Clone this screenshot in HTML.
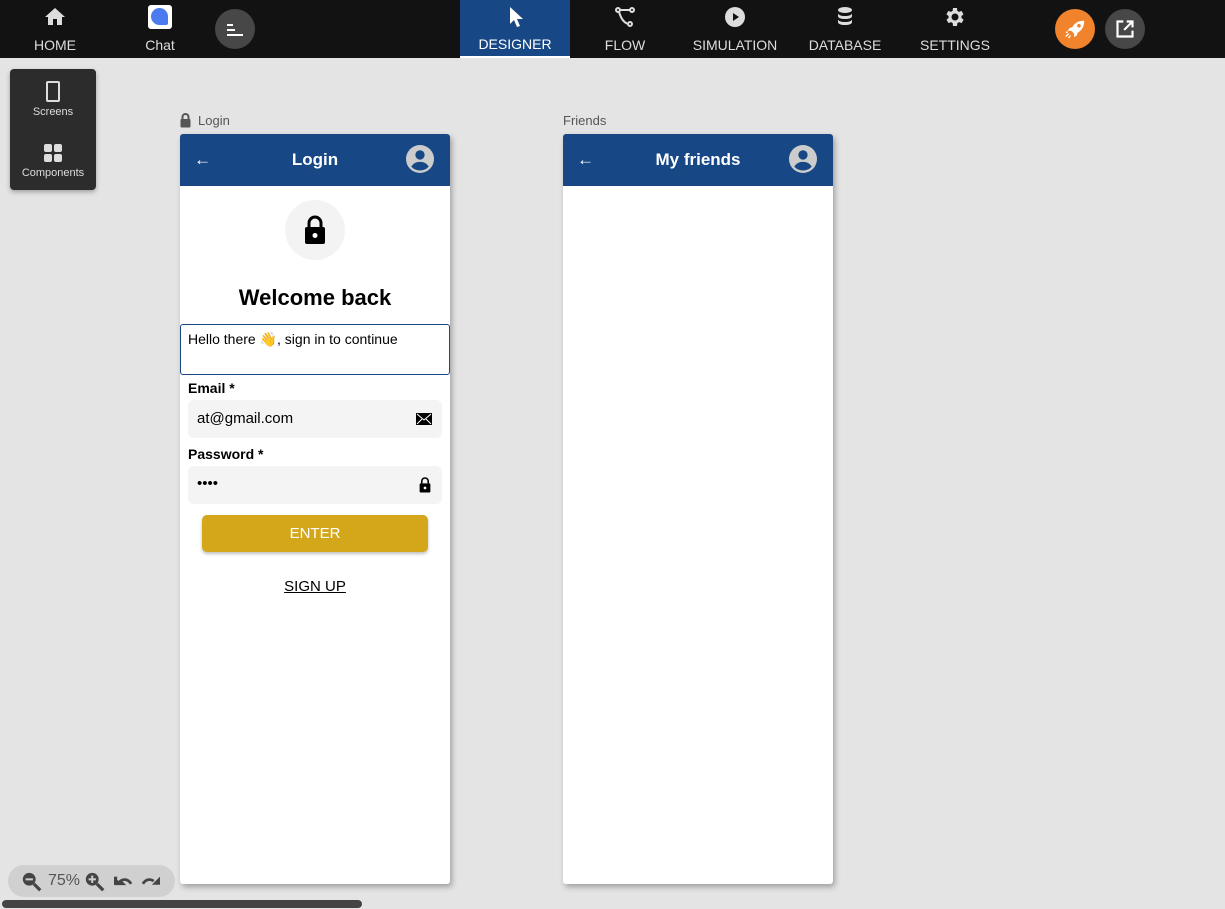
<!DOCTYPE html>
<html><head><style>
*{box-sizing:border-box;margin:0;padding:0}
body{width:1225px;height:909px;background:#e4e4e4;font-family:"Liberation Sans",sans-serif;position:relative;overflow:hidden}
.top{position:absolute;left:0;top:0;width:1225px;height:58px;background:#121212}
.nav{position:absolute;top:0;height:58px;text-align:center;color:#ddd;font-size:14px}
.nav .lbl{position:absolute;left:0;right:0;top:37px}
.nav svg{position:absolute;top:5px;left:50%;margin-left:-12px}
.abs{position:absolute}
.phone{position:absolute;top:134px;width:270px;height:750px;background:#fff;border-radius:3px;box-shadow:2px 3px 6px rgba(0,0,0,.3)}
.ph{height:52px;background:#174885;border-radius:3px 3px 0 0;position:relative;color:#fff;text-align:center;font-size:17px;line-height:52px;font-weight:bold}
</style></head><body>
<div class="top"></div>
<div class="nav" style="left:20px;width:70px"><svg width="24" height="24" viewBox="0 0 24 24"><path fill="#ddd" d="M10 20v-6h4v6h5v-8h3L12 3 2 12h3v8z"/></svg><div class="lbl">HOME</div></div>
<div class="nav" style="left:125px;width:70px"><div class="abs" style="left:23px;top:5px;width:24px;height:24px;background:#fff;border-radius:3px"><div class="abs" style="left:3px;top:3px;width:17px;height:17px;border-radius:50% 50% 2px 50%;background:#4a7cf0"></div></div><div class="lbl">Chat</div></div>
<div class="abs" style="left:215px;top:9px;width:40px;height:40px;border-radius:50%;background:#474747"><div class="abs" style="left:12px;top:15px;width:6px;height:2px;background:#fff"></div><div class="abs" style="left:12px;top:20px;width:8px;height:2px;background:#fff"></div><div class="abs" style="left:12px;top:25px;width:16px;height:2px;background:#fff"></div></div>
<div class="abs" style="left:460px;top:0;width:110px;height:58px;background:#174885;border-bottom:2px solid #fff"></div>
<div class="nav" style="left:460px;width:110px;color:#fff"><svg width="24" height="24" viewBox="0 0 24 24"><path fill="#fff" d="M7 2v17l4-4 3 7 3-1-3-7h6z"/></svg><div class="lbl" style="top:36px">DESIGNER</div></div>
<div class="nav" style="left:590px;width:70px"><svg width="24" height="24" viewBox="0 0 24 24" fill="none" stroke="#ddd" stroke-width="2"><circle cx="5" cy="5" r="2"/><circle cx="19" cy="5" r="2"/><circle cx="17" cy="19" r="2"/><path d="M7 5h10M6 7c2 6 4 10 9 12"/></svg><div class="lbl">FLOW</div></div>
<div class="nav" style="left:685px;width:100px"><svg width="24" height="24" viewBox="0 0 24 24"><circle cx="12" cy="12" r="10" fill="#ddd"/><path d="M10 8l6 4-6 4z" fill="#121212"/></svg><div class="lbl">SIMULATION</div></div>
<div class="nav" style="left:800px;width:90px"><svg width="24" height="24" viewBox="0 0 24 24" fill="#ddd"><ellipse cx="12" cy="5" rx="7" ry="3"/><path d="M5 8c0 2 3 3 7 3s7-1 7-3v3c0 2-3 3-7 3s-7-1-7-3zM5 14c0 2 3 3 7 3s7-1 7-3v3c0 2-3 3-7 3s-7-1-7-3z"/></svg><div class="lbl">DATABASE</div></div>
<div class="nav" style="left:915px;width:80px"><svg width="24" height="24" viewBox="0 0 24 24"><path fill="#ddd" d="M19.4 13a7 7 0 000-2l2.1-1.6-2-3.5-2.5 1a7 7 0 00-1.7-1L15 3h-4l-.4 2.9a7 7 0 00-1.7 1l-2.5-1-2 3.5L6.6 11a7 7 0 000 2l-2.1 1.6 2 3.5 2.5-1a7 7 0 001.7 1L11 21h4l.4-2.9a7 7 0 001.7-1l2.5 1 2-3.5zM13 15.5a3.5 3.5 0 110-7 3.5 3.5 0 010 7z" transform="translate(-1 0)"/></svg><div class="lbl">SETTINGS</div></div>
<div class="abs" style="left:1055px;top:9px;width:40px;height:40px;border-radius:50%;background:#f0832b"><svg class="abs" style="left:9px;top:9px" width="22" height="22" viewBox="0 0 24 24" fill="#fff"><path d="M21 3c-5 0-9 2-12 7l-3 1-2 3 4 0 3 3 0 4 3-2 1-3c5-3 7-7 7-13zM15 7a2 2 0 110 3 2 2 0 010-3z"/><path d="M5 17l-3 3M7 19l-2 3M4 15l-2 1" stroke="#fff" stroke-width="1.5"/></svg></div>
<div class="abs" style="left:1105px;top:9px;width:40px;height:40px;border-radius:50%;background:#474747"><svg class="abs" style="left:10px;top:10px" width="20" height="20" viewBox="0 0 24 24" fill="none" stroke="#fff" stroke-width="2.6"><path d="M10 3H3v18h18v-7M14 3h7v7M21 3L11 13"/></svg></div>
<div class="abs" style="left:10px;top:69px;width:86px;height:121px;background:#2c2c2c;border-radius:4px;box-shadow:0 2px 5px rgba(0,0,0,.3);color:#ddd;font-size:11px;text-align:center">
<div class="abs" style="left:36px;top:12px;width:14px;height:21px;border:2px solid #ddd;border-radius:2px"></div>
<div class="abs" style="left:0;right:0;top:37px">Screens</div>
<div class="abs" style="left:34px;top:75px;width:8px;height:8px;background:#ddd;border-radius:2px"></div><div class="abs" style="left:44px;top:75px;width:8px;height:8px;background:#ddd;border-radius:2px"></div><div class="abs" style="left:34px;top:85px;width:8px;height:8px;background:#ddd;border-radius:2px"></div><div class="abs" style="left:44px;top:85px;width:8px;height:8px;background:#ddd;border-radius:2px"></div>
<div class="abs" style="left:0;right:0;top:98px">Components</div></div>
<svg class="abs" style="left:179px;top:112px" width="13" height="17" viewBox="0 0 26 32"><path d="M7 13V9a6 6 0 0112 0v4" fill="none" stroke="#555" stroke-width="4"/><rect x="3" y="13" width="20" height="17" rx="2" fill="#555"/></svg>
<div class="abs" style="left:198px;top:113px;color:#555;font-size:13px">Login</div>
<div class="abs" style="left:563px;top:113px;color:#555;font-size:13px">Friends</div>
<div class="phone" style="left:180px">
<div class="ph">Login<span class="abs" style="left:14px;top:0;font-size:17px;font-weight:normal">←</span><svg class="abs" style="left:226px;top:11px" width="28" height="28" viewBox="0 0 24 24"><circle cx="12" cy="12" r="12" fill="#ccc"/><circle cx="12" cy="8.5" r="4" fill="#174885"/><path d="M4.5 18.5c2-3 4.5-4 7.5-4s5.5 1 7.5 4a10 10 0 01-15 0z" fill="#174885"/></svg></div>
<div class="abs" style="left:105px;top:66px;width:60px;height:60px;border-radius:50%;background:#f3f3f3"><svg class="abs" style="left:17px;top:14px" width="26" height="32" viewBox="0 0 26 32"><path d="M7 13V9a6 6 0 0112 0v4" fill="none" stroke="#000" stroke-width="3"/><rect x="3" y="13" width="20" height="17" rx="2"/><circle cx="13" cy="21.5" r="2.5" fill="#fff"/></svg></div>
<div class="abs" style="left:0;right:0;top:151px;text-align:center;font-size:22px;color:#000;font-weight:bold;-webkit-text-stroke:0">Welcome back</div>
<div class="abs" style="left:0;top:190px;width:270px;height:51px;border:1.5px solid #174885;border-radius:3px;padding:6px 7px;font-size:14px">Hello there 👋, sign in to continue</div>
<div class="abs" style="left:8px;top:246px;font-size:14px;font-weight:bold">Email *</div>
<div class="abs" style="left:8px;top:266px;width:254px;height:38px;background:#f4f4f4;border-radius:6px;padding:10px 9px;font-size:15px">at@gmail.com<svg class="abs" style="right:10px;top:13px" width="16" height="12" viewBox="0 0 16 12"><rect width="16" height="12" fill="#000"/><path d="M1 1l7 6 7-6M1 11l5-5M15 11l-5-5" stroke="#fff" stroke-width="1" fill="none"/></svg></div>
<div class="abs" style="left:8px;top:312px;font-size:14px;font-weight:bold">Password *</div>
<div class="abs" style="left:8px;top:332px;width:254px;height:38px;background:#f4f4f4;border-radius:6px;padding:9px 9px;font-size:15px">••••<svg class="abs" style="right:10px;top:10px" width="14" height="18" viewBox="0 0 26 32"><path d="M7 13V9a6 6 0 0112 0v4" fill="none" stroke="#000" stroke-width="3"/><rect x="3" y="13" width="20" height="17" rx="2"/><circle cx="13" cy="21.5" r="2.5" fill="#fff"/></svg></div>
<div class="abs" style="left:22px;top:381px;width:226px;height:37px;background:#d4a61a;border-radius:5px;box-shadow:0 2px 3px rgba(0,0,0,.25);color:#fff;text-align:center;line-height:38px;font-size:15px">ENTER</div>
<div class="abs" style="left:0;right:0;top:444px;text-align:center;font-size:15px;text-decoration:underline">SIGN UP</div>
</div>
<div class="phone" style="left:563px">
<div class="ph">My friends<span class="abs" style="left:14px;top:0;font-size:17px;font-weight:normal">←</span><svg class="abs" style="left:226px;top:11px" width="28" height="28" viewBox="0 0 24 24"><circle cx="12" cy="12" r="12" fill="#ccc"/><circle cx="12" cy="8.5" r="4" fill="#174885"/><path d="M4.5 18.5c2-3 4.5-4 7.5-4s5.5 1 7.5 4a10 10 0 01-15 0z" fill="#174885"/></svg></div>
</div>
<div class="abs" style="left:8px;top:865px;width:167px;height:32px;background:#d0d0d0;border-radius:16px;color:#555;font-size:16px;line-height:32px">
<svg class="abs" style="left:13px;top:6px" width="22" height="22" viewBox="0 0 24 24"><circle cx="9" cy="9" r="7" fill="#444"/><path d="M14 14l7 7" stroke="#444" stroke-width="3.5"/><rect x="5" y="8" width="8" height="2.2" fill="#d0d0d0"/></svg>
<span class="abs" style="left:40px">75%</span>
<svg class="abs" style="left:76px;top:6px" width="22" height="22" viewBox="0 0 24 24"><circle cx="9" cy="9" r="7" fill="#444"/><path d="M14 14l7 7" stroke="#444" stroke-width="3.5"/><rect x="5" y="8" width="8" height="2.2" fill="#d0d0d0"/><rect x="7.9" y="5" width="2.2" height="8" fill="#d0d0d0"/></svg>
<svg class="abs" style="left:104px;top:8px" width="22" height="18" viewBox="0 0 24 20"><path d="M4 4v8h8l-3-3c4-3 9-2 12 3" fill="none" stroke="#444" stroke-width="3"/><path d="M2 4v9h9z" fill="#444"/></svg>
<svg class="abs" style="left:132px;top:8px" width="22" height="18" viewBox="0 0 24 20"><path d="M15 9c-4-3-9-2-12 3" fill="none" stroke="#444" stroke-width="3"/><path d="M22 4v9h-9z" fill="#444"/></svg>
</div>
<div class="abs" style="left:2px;top:900px;width:360px;height:8px;background:#444;border-radius:4px"></div>
</body></html>
